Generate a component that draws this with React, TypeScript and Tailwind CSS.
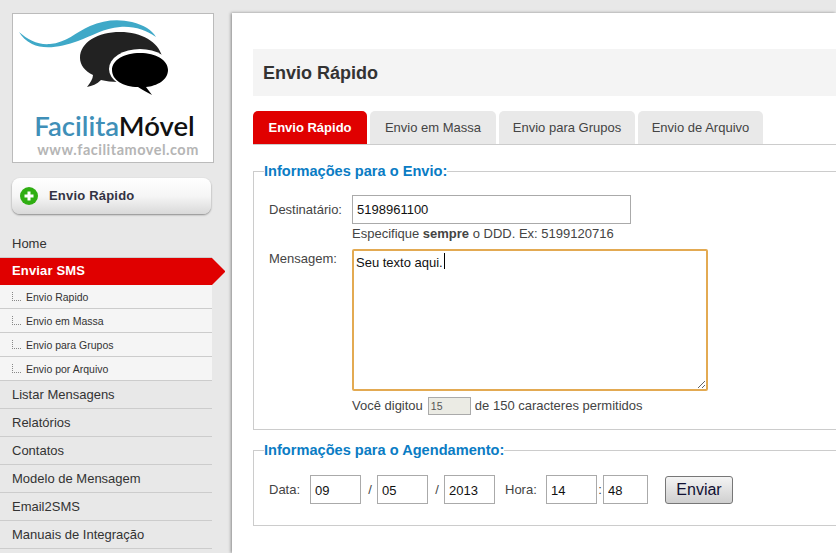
const FONT = "font-['Liberation_Sans',Arial,sans-serif]"

const SUB_ITEMS = ["Envio Rapido", "Envio em Massa", "Envio para Grupos", "Envio por Arquivo"]
const MENU_BOTTOM = ["Listar Mensagens", "Relatórios", "Contatos", "Modelo de Mensagem", "Email2SMS", "Manuais de Integração"]
const TABS = [
  { label: "Envio em Massa", w: "w-[126px]" },
  { label: "Envio para Grupos", w: "w-[136px]" },
  { label: "Envio de Arquivo", w: "w-[125px]" },
]

function Logo() {
  return (
    <div className="w-[202px] h-[150px] bg-white border border-[#bbbbbb] flex flex-col items-center overflow-hidden">
      <svg width="200" height="98" viewBox="13 14 200 98" className="shrink-0">
        <path d="M19 32 C28 40 38 45 50 44 C66 43 76 32 90 26 C104 20 118 19 132 22 C144 25 152 30 156 37 C146 30 134 26 120 27 C104 28 92 36 78 41 C62 47 44 50 32 44 C26 41 22 37 19 32 Z" fill="#3fa9c8" />
        <path d="M80 58 C80 42 98 32 120 32 C142 32 158 42 162 56 C160 75 140 82 118 82 C112 82 106 81 101 80 C97 84 92 86 87 87 C90 83 93 79 93 75 C85 71 80 65 80 58 Z" fill="#222222" />
        <ellipse cx="140" cy="69" rx="31" ry="20" fill="#ffffff" />
        <path d="M112 70 C112 60 124 53 140 53 C156 53 168 60 168 70 C168 80 157 86 146 87 C148 90 150 92 152 95 C147 92 142 90 138 87 C123 87 112 80 112 70 Z" fill="#000000" />
      </svg>
      <div className="ml-[3px] font-['Lato',sans-serif] text-[27.5px] leading-[28px] font-semibold whitespace-nowrap">
        <span className="text-[#3f8fb8]">Facilita</span>
        <span className="text-[#111111]">Móvel</span>
      </div>
      <div className="ml-[10px] font-['Lato',sans-serif] font-bold text-[14.5px] leading-[18px] mt-[1px] text-[#b5b5b5] tracking-[0.5px] whitespace-nowrap">
        www.facilitamovel.com
      </div>
    </div>
  )
}

function Sidebar() {
  return (
    <aside className="w-[232px] shrink-0">
      <div className="pl-3 pt-[13px]">
        <Logo />
        <button className="mt-[15px] w-[199px] h-[36px] rounded-[8px] bg-gradient-to-b from-white via-[#f6f6f6] to-[#d9d9d9] shadow-[0_1px_2px_#888888] flex items-center pl-2 gap-[11px]">
          <span className="w-[18px] h-[18px] rounded-full bg-[#2fae12] flex items-center justify-center">
            <svg width="10" height="10" viewBox="0 0 10 10"><path d="M3.5 0.5h3v3h3v3h-3v3h-3v-3h-3v-3h3z" fill="#ffffff" /></svg>
          </span>
          <span className="text-[13px] font-bold text-[#333344] tracking-[0.2px]">Envio Rápido</span>
        </button>
      </div>
      <nav className="mt-[17px] w-[225px] text-[13px] text-[#333333]">
        <div className="w-[212px] h-[27px] pl-3 leading-[25px] border-b border-[#cccccc]">Home</div>
        <div className="flex h-[27px]">
          <div className="w-[212px] pl-3 bg-[#e00000] text-white font-bold leading-[25px] tracking-[0.15px]">Enviar SMS</div>
          <div className="border-l-[13px] border-l-[#e00000] border-y-[13.5px] border-y-transparent" />
        </div>
        {SUB_ITEMS.map(s => (
          <div key={s} className="w-[212px] h-[24px] pl-3 flex items-center gap-[5px] bg-[#f5f5f5] border-b border-[#cccccc] text-[10.5px]">
            <span className="w-[9px] h-[9px] border-l border-b border-dotted border-[#888888]" />
            <span className="pt-[2px]">{s}</span>
          </div>
        ))}
        {MENU_BOTTOM.map(m => (
          <div key={m} className="w-[212px] h-[28px] pl-3 leading-[27px] border-b border-[#cccccc]">{m}</div>
        ))}
      </nav>
    </aside>
  )
}

function Field({ value, w }: { value: string; w: string }) {
  return (
    <input
      readOnly
      value={value}
      className={`${w} h-[29px] px-[4px] border border-[#aaaaaa] bg-white text-[13px] text-[#111111] outline-none`}
    />
  )
}

function DateField({ value, w }: { value: string; w: string }) {
  return (
    <input
      readOnly
      value={value}
      className={`${w} h-[29px] px-[4px] pt-[1px] border border-[#aaaaaa] bg-white text-[13px] text-[#111111] outline-none`}
    />
  )
}

function Main() {
  return (
    <main className="mt-[13px] flex-1 min-w-0 bg-white shadow-[-1px_0_3px_#888888] pl-[21px] pt-[36px] overflow-hidden">
      <div className="h-[47px] bg-[#f4f4f4] pl-[10px] pt-[2px] flex items-center text-[18px] font-bold text-[#333333]">Envio Rápido</div>

      <div className="mt-[15px] h-[34px] flex gap-[3px] border-b border-[#cccccc]">
        <div className="w-[114px] h-[33px] pt-[1px] bg-[#e00000] rounded-t-[5px] text-white font-bold text-[13px] flex items-center justify-center">Envio Rápido</div>
        {TABS.map(t => (
          <div key={t.label} className={`${t.w} h-[33px] pt-[1px] bg-[#e9e9e9] rounded-t-[5px] text-[#444444] text-[13px] flex items-center justify-center`}>{t.label}</div>
        ))}
      </div>

      <fieldset className="mt-[18px] w-[640px] h-[267px] border border-[#cccccc] pl-[15px] text-[13px] text-[#444444]">
        <legend className="ml-[-5px] text-[14.6px] leading-[16px] font-bold text-[#0a7cc4]">Informações para o Envio:</legend>
        <div className="mt-[16px] flex">
          <label className="w-[83px] pt-[7px] leading-[15px]">Destinatário:</label>
          <div>
            <Field value="5198961100" w="w-[279px]" />
            <p className="mt-[2px] leading-[15px]">Especifique <b>sempre</b> o DDD. Ex: 5199120716</p>
          </div>
        </div>
        <div className="mt-[8px] flex">
          <label className="w-[83px] pt-[2px] leading-[15px]">Mensagem:</label>
          <div>
            <div className="relative w-[356px] h-[142px]">
              <textarea
                readOnly
                defaultValue="Seu texto aqui."
                className="block w-[356px] h-[142px] border-2 border-[#e3aa52] rounded-[2px] px-[2px] py-[4px] text-[13px] leading-[15px] text-[#111111] outline-none"
              />
              <span className="absolute left-[92px] top-[4px] w-px h-[16px] bg-black" />
            </div>
            <div className="mt-[5px] flex items-center">
              <span className="mr-[5px]">Você digitou</span>
              <input readOnly value="15" className="w-[43px] h-[18px] mr-[4px] px-[2px] border border-[#aaaaaa] bg-[#ebebe4] text-[10.5px] text-[#555555] outline-none" />
              <span>de 150 caracteres permitidos</span>
            </div>
          </div>
        </div>
      </fieldset>

      <fieldset className="mt-[12px] w-[640px] h-[84px] border border-[#cccccc] pl-[15px] text-[13px] text-[#444444]">
        <legend className="ml-[-5px] text-[14.6px] leading-[16px] font-bold text-[#0a7cc4]">Informações para o Agendamento:</legend>
        <div className="mt-[17px] flex items-center">
          <span className="w-[41px] pt-[1px]">Data:</span>
          <DateField value="09" w="w-[51px]" />
          <span className="w-[16px] pl-[2px] text-center">/</span>
          <DateField value="05" w="w-[51px]" />
          <span className="w-[16px] pl-[2px] text-center">/</span>
          <DateField value="2013" w="w-[51px]" />
          <span className="ml-[10px] w-[41px] pt-[1px]">Hora:</span>
          <DateField value="14" w="w-[51px]" />
          <span className="w-[6px] text-center">:</span>
          <DateField value="48" w="w-[45px]" />
          <button className="ml-[17px] w-[68px] h-[28px] rounded-[3px] border border-[#777777] bg-gradient-to-b from-[#f4f4f4] to-[#cfcfcf] text-[16px] text-[#111133]">Enviar</button>
        </div>
      </fieldset>
    </main>
  )
}

export default function App() {
  return (
    <div className={`${FONT} w-[836px] h-[553px] overflow-hidden bg-[#e8e8e8] flex`}>
      <Sidebar />
      <Main />
    </div>
  )
}
